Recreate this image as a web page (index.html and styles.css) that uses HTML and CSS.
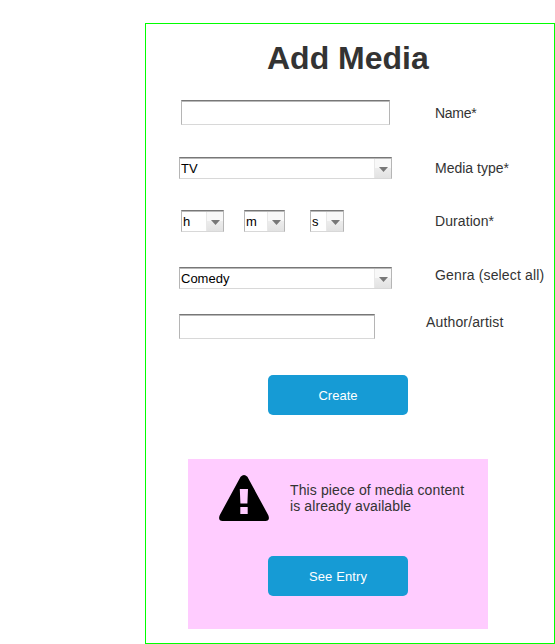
FILE: index.html
```html
<!DOCTYPE html>
<html lang="en">
<head>
<meta charset="utf-8">
<title>Add Media</title>
<link rel="stylesheet" href="styles.css">
</head>
<body>
<main class="panel">
  <h1 class="title">Add Media</h1>
  <form class="form">
    <div class="row row-name">
      <div class="control"><div class="field field-name"></div></div>
      <label class="label">Name*</label>
    </div>
    <div class="row row-type">
      <div class="control"><div class="field select select-wide"><span class="value">TV</span><span class="arrow"><svg class="tri" width="9" height="5" viewBox="0 0 9 5"><path d="M0 0H9L4.5 5Z"/></svg></span></div></div>
      <label class="label">Media type*</label>
    </div>
    <div class="row row-duration">
      <div class="control">
        <div class="field select select-h"><span class="value">h</span><span class="arrow"><svg class="tri" width="9" height="5" viewBox="0 0 9 5"><path d="M0 0H9L4.5 5Z"/></svg></span></div>
        <div class="field select select-m"><span class="value">m</span><span class="arrow"><svg class="tri" width="9" height="5" viewBox="0 0 9 5"><path d="M0 0H9L4.5 5Z"/></svg></span></div>
        <div class="field select select-s"><span class="value">s</span><span class="arrow"><svg class="tri" width="9" height="5" viewBox="0 0 9 5"><path d="M0 0H9L4.5 5Z"/></svg></span></div>
      </div>
      <label class="label">Duration*</label>
    </div>
    <div class="row row-genre">
      <div class="control"><div class="field select select-wide"><span class="value">Comedy</span><span class="arrow"><svg class="tri" width="9" height="5" viewBox="0 0 9 5"><path d="M0 0H9L4.5 5Z"/></svg></span></div></div>
      <label class="label">Genra (select all)</label>
    </div>
    <div class="row row-author">
      <div class="control"><div class="field field-author"></div></div>
      <label class="label">Author/artist</label>
    </div>
    <button class="button create" type="button">Create</button>
  </form>
  <section class="notice">
    <div class="message">
      <svg class="warning" width="50" height="46" viewBox="0 0 50 46">
        <path fill-rule="evenodd" d="M21.6 1.8Q25 -1.8 28.4 1.8L49.3 40.2Q51.4 45.8 46.4 46H3.6Q-1.4 45.8.7 40.2ZM20.8 14L21.4 28.5H28.4L29 14ZM21.3 32V39H28.7V32Z"/>
      </svg>
      <p class="text">This piece of media content<br>is already available</p>
    </div>
    <button class="button" type="button">See Entry</button>
  </section>
</main>
</body>
</html>
```
FILE: styles.css
```css
* {
  box-sizing: border-box;
}

body {
  margin: 0;
  background: #fff;
  color: #333;
  font: 14px/16px "Liberation Sans", Arial, sans-serif;
  overflow: hidden;
}

.panel {
  width: 410px;
  height: 621px;
  margin: 23px 0 0 145px;
  border: 1px solid #0f0;
}

.title {
  margin: 16px 0 0 121px;
  font-size: 32px;
  line-height: 37px;
  white-space: nowrap;
}

.form {
  display: flex;
  flex-direction: column;
}

.row {
  display: flex;
  align-items: flex-start;
  padding-left: 33px;
}

.control {
  display: flex;
  flex: 0 0 256px;
}

.label {
  white-space: nowrap;
}

.row-name { height: 57px; margin-top: 23px; }
.row-type { height: 53px; }
.row-duration { height: 57px; }
.row-genre { height: 47px; }
.row-author { height: 61px; }

.row-name .label { margin-top: 5px; letter-spacing: -0.3px; }
.row-type .label,
.row-duration .label { margin-top: 3px; }
.row-duration .label { letter-spacing: 0.08px; }
.row-genre .label,
.row-author .label { letter-spacing: 0.15px; }
.row-author .control { flex-basis: 247px; }

.field {
  height: 25px;
  border: 1px solid #b5b5b5;
  border-top-color: #777;
  border-bottom-color: #d8d8d8;
  background: #fff;
  box-shadow: inset 0 1px #b9b9b9;
}

.field-name { width: 209px; margin-left: 2px; }
.field-author { width: 196px; }

.select {
  display: flex;
  justify-content: space-between;
  height: 22px;
  padding: 1px 0 0 1px;
}

.select-wide { width: 213px; }
.select-h { width: 43px; margin-left: 2px; }
.select-m { width: 41px; margin-left: 20px; }
.select-s { width: 34px; margin-left: 25px; }

.value {
  color: #000;
  font-size: 13px;
  line-height: 20px;
}

.arrow {
  display: flex;
  justify-content: center;
  width: 17px;
  padding-top: 8px;
  border-left: 1px solid #e8e8e8;
  background: linear-gradient(#f8f8f8 45%, #ededed 45%, #e2e2e2);
}

.tri {
  display: block;
  fill: #777;
}

.button {
  width: 140px;
  height: 40px;
  padding: 0;
  border: 0;
  border-radius: 5px;
  background: #169bd5;
  color: #fff;
  font: 13px/15px "Liberation Sans", Arial, sans-serif;
}

.create {
  margin-left: 122px;
}

.notice {
  display: flex;
  flex-direction: column;
  align-items: center;
  width: 300px;
  height: 170px;
  margin: 44px 0 0 42px;
  padding-top: 16px;
  background: #fcf;
}

.notice .button {
  letter-spacing: 0.1px;
}

.message {
  display: flex;
  align-self: stretch;
  gap: 21px;
  height: 81px;
  padding-left: 31px;
}

.text {
  margin: 7px 0 0;
  letter-spacing: 0.11px;
  white-space: nowrap;
}
```
